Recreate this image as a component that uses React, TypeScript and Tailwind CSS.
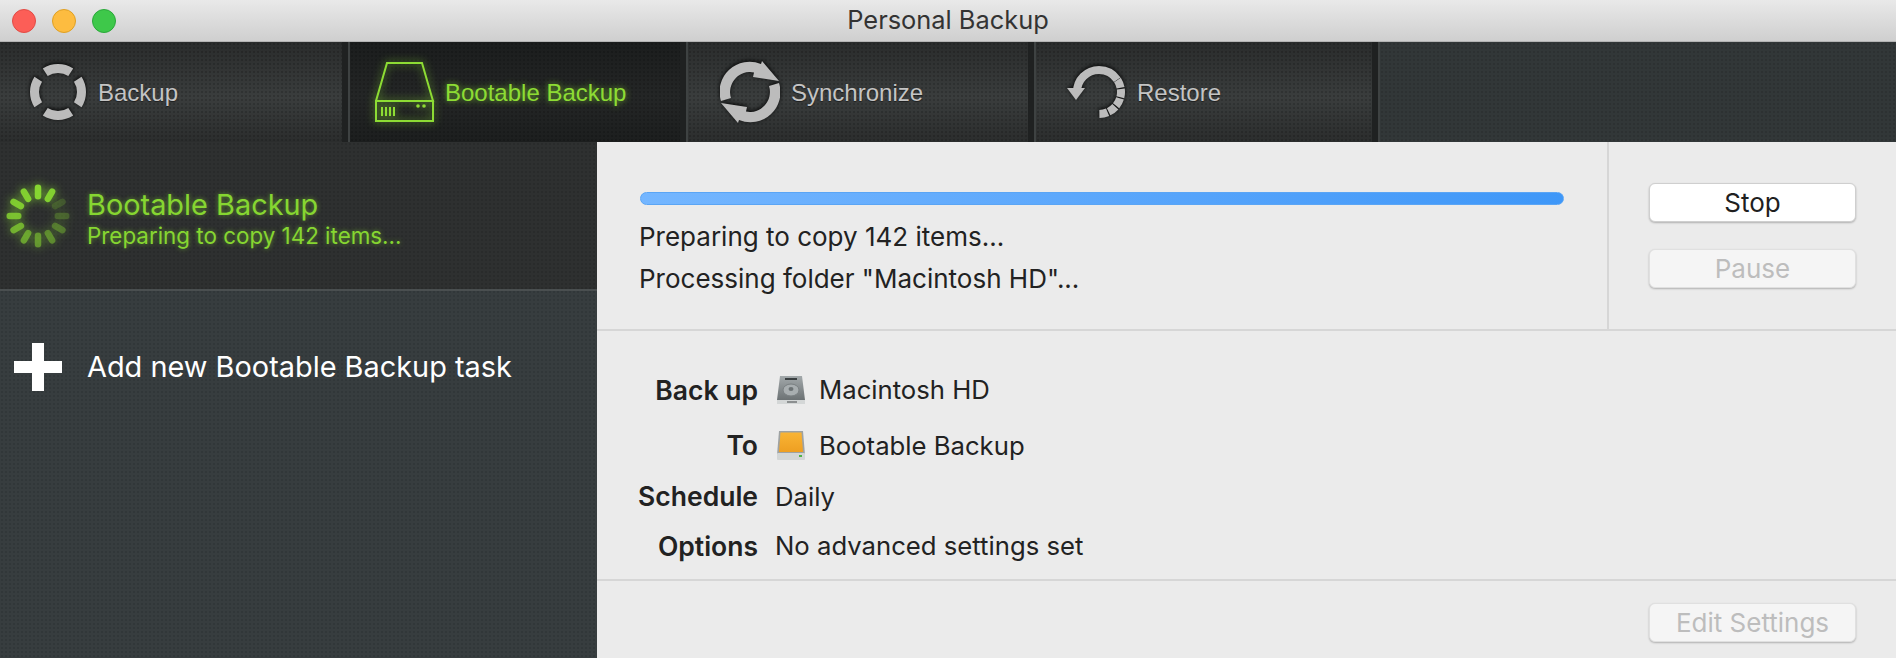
import type { ReactNode } from 'react';

const dots =
  'bg-[radial-gradient(circle,rgba(0,0,0,0.1)_1px,transparent_1.2px)] bg-[size:4px_4px]';
const tabDots =
  'bg-[radial-gradient(circle,rgba(0,0,0,0.16)_1px,transparent_1.2px),linear-gradient(to_bottom,#2a2c2c,#3a3d3d_55%,#2b2d2d)] bg-[size:4px_4px,100%_100%]';
const activeDots =
  'bg-[radial-gradient(circle,rgba(0,0,0,0.16)_1px,transparent_1.2px),linear-gradient(to_bottom,#1b1d1d,#242626_55%,#1c1e1e)] bg-[size:4px_4px,100%_100%]';

function BackupIcon() {
  return (
    <svg width="56" height="56" viewBox="0 0 56 56" className="drop-shadow-[0_-1px_2px_rgba(0,0,0,0.9)]">
      <circle cx="28" cy="28" r="23.5" fill="none" stroke="#bcbcbc" strokeWidth="9" pathLength={360} strokeDasharray="66 24" strokeDashoffset="33" />
    </svg>
  );
}

function DriveIcon() {
  return (
    <svg width="60" height="62" viewBox="0 0 60 62" className="drop-shadow-[0_0_4px_rgba(140,230,50,0.75)]">
      <g fill="none" stroke="#8ddc34" strokeWidth="2">
        <path d="M12 2H47L58 40H1Z" />
        <rect x="1" y="40" width="57" height="20" />
        <path d="M7 46V55M11 46V55M15 46V55M19 46V55" />
      </g>
      <circle cx="43" cy="45" r="1.8" fill="#8ddc34" />
      <circle cx="49" cy="45" r="1.8" fill="#8ddc34" />
    </svg>
  );
}

function SyncIcon() {
  const arrow = 'M1 40A30 30 0 0 1 41 3L42 0L59 20L33 16L34 11.4A20 20 0 0 0 11 37Z';
  return (
    <svg width="60" height="62" viewBox="0 0 60 62" className="drop-shadow-[0_-1px_2px_rgba(0,0,0,0.9)]">
      <path d={arrow} fill="#bcbcbc" />
      <path d={arrow} fill="#bcbcbc" transform="rotate(180 30 31)" />
    </svg>
  );
}

function RestoreIcon() {
  return (
    <svg width="58" height="60" viewBox="0 0 58 60" className="drop-shadow-[0_-1px_2px_rgba(0,0,0,0.9)]">
      <g fill="none" stroke="#bcbcbc" strokeWidth="8">
        <circle cx="32" cy="30" r="22" pathLength={360} strokeDasharray="146 214" transform="rotate(180 32 30)" />
        {[-33, -8, 17, 42, 67].map((a) => (
          <circle key={a} cx="32" cy="30" r="22" pathLength={360} strokeDasharray="22 338" transform={`rotate(${a} 32 30)`} />
        ))}
      </g>
      <path d="M0 26H18L9 38Z" fill="#bcbcbc" />
    </svg>
  );
}

function Spinner() {
  const alpha = [1, 0.95, 0.2, 0.26, 0.38, 0.48, 0.55, 0.62, 0.72, 0.82, 0.9, 0.95];
  return (
    <svg width="64" height="64" viewBox="0 0 64 64" className="drop-shadow-[0_0_5px_rgba(140,230,50,0.8)]">
      {alpha.map((o, i) => (
        <rect key={i} x="28.75" y="0.5" width="6.5" height="15" rx="3.25" fill="#86d631" opacity={o} transform={`rotate(${i * 30} 32 32)`} />
      ))}
    </svg>
  );
}

function HdIcon() {
  return (
    <svg width="28" height="30" viewBox="0 0 28 30">
      <defs>
        <linearGradient id="hd" x1="0" y1="0" x2="0" y2="1">
          <stop offset="0" stopColor="#a3a9ab" />
          <stop offset="1" stopColor="#6c7274" />
        </linearGradient>
      </defs>
      <path d="M3 1H25L28 25H0Z" fill="url(#hd)" />
      <rect x="8" y="3" width="12" height="2" fill="#3a3f41" />
      <ellipse cx="14" cy="15" rx="8" ry="6" fill="#a8aeb0" stroke="#7a8082" />
      <ellipse cx="14" cy="14" rx="2.5" ry="2" fill="#6c7274" />
      <rect x="0" y="25" width="28" height="4" fill="#d4d7d7" />
      <path d="M11 26V28M13 26V28M15 26V28M17 26V28M19 26V28" stroke="#44494a" />
    </svg>
  );
}

function ExternalIcon() {
  return (
    <svg width="28" height="30" viewBox="0 0 28 30">
      <defs>
        <linearGradient id="ext" x1="0" y1="0" x2="0" y2="1">
          <stop offset="0" stopColor="#f9b434" />
          <stop offset="1" stopColor="#ee9f22" />
        </linearGradient>
      </defs>
      <path d="M2 0H26L28 24H0Z" fill="#9ea2a3" />
      <path d="M3.5 1.5H24.5L26 21H2Z" fill="url(#ext)" />
      <rect x="0" y="22" width="28" height="7" rx="1" fill="#d3d6d6" />
      <rect x="22" y="24" width="3" height="2" fill="#4fb348" />
    </svg>
  );
}

function Tab({ width, active, className, children }: { width: string; active?: boolean; className: string; children: ReactNode }) {
  return (
    <div
      className={`${width} ${className} ${active ? activeDots : tabDots} flex h-full shrink-0 items-center border-r-2 border-r-[#3e4242] shadow-[inset_-6px_0_0_#1f2121]`}
    >
      {children}
    </div>
  );
}

function TabLabel({ children, active }: { children: ReactNode; active?: boolean }) {
  return (
    <span
      className={`pt-[2px] font-['Liberation_Sans',sans-serif] text-[24px] ${
        active
          ? 'text-[#8ddc34] [text-shadow:0_0_6px_rgba(140,230,50,0.75)]'
          : 'text-[#c4c4c4] [text-shadow:0_1px_1px_rgba(0,0,0,0.5)]'
      }`}
    >
      {children}
    </span>
  );
}

function Row({ label, height, children }: { label: string; height: string; children: ReactNode }) {
  return (
    <div className={`${height} flex items-center`}>
      <div className="w-[161px] text-right text-[26.5px] font-semibold">{label}</div>
      <div className="ml-[17px] flex items-center text-[25.7px]">{children}</div>
    </div>
  );
}

function Button({ label, disabled }: { label: string; disabled?: boolean }) {
  return (
    <button
      className={`h-[39px] w-[207px] rounded-[6px] border text-[26px] leading-none shadow-[0_1px_2px_rgba(0,0,0,0.25)] ${
        disabled ? 'border-[#e0e0e0] bg-[#f5f5f5] text-[#bdbdbd]' : 'border-[#cfcfcf] bg-white text-[#1f1f1f]'
      }`}
    >
      {label}
    </button>
  );
}

export default function App() {
  return (
    <div className="flex h-[658px] w-[1896px] flex-col overflow-hidden bg-[#ebebeb] font-['Inter',sans-serif] text-[#222]">
      {/* Title bar */}
      <div className="grid h-[42px] shrink-0 grid-cols-[1fr_auto_1fr] items-center border-b border-b-[#b4b4b4] bg-gradient-to-b from-[#e9e9e9] to-[#cfcfcf]">
        <div className="flex gap-4 pl-3">
          <div className="h-6 w-6 rounded-full border border-[#e24b45] bg-[#fc5e57]" />
          <div className="h-6 w-6 rounded-full border border-[#dfa023] bg-[#fdbc40]" />
          <div className="h-6 w-6 rounded-full border border-[#2aa83a] bg-[#3ec84a]" />
        </div>
        <div className="text-[25.4px] text-[#333]">Personal Backup</div>
        <div />
      </div>

      {/* Toolbar */}
      <div className="flex h-[100px] shrink-0 bg-[#323738]">
        <Tab width="w-[350px]" className="gap-3 pl-[30px]">
          <BackupIcon />
          <TabLabel>Backup</TabLabel>
        </Tab>
        <Tab width="w-[338px]" active className="gap-[10px] pl-[25px]">
          <DriveIcon />
          <TabLabel active>Bootable Backup</TabLabel>
        </Tab>
        <Tab width="w-[348px]" className="gap-[11px] pl-[32px]">
          <SyncIcon />
          <TabLabel>Synchronize</TabLabel>
        </Tab>
        <Tab width="w-[344px]" className="gap-3 pl-[31px]">
          <RestoreIcon />
          <TabLabel>Restore</TabLabel>
        </Tab>
        <div className={`flex-1 ${dots}`} />
      </div>

      <div className="flex min-h-0 flex-1">
        {/* Sidebar */}
        <div className={`w-[597px] shrink-0 bg-[#373d3f] ${dots}`}>
          <div className={`flex h-[147px] items-center gap-[17px] bg-[#2e3030] pl-[6px] ${dots}`}>
            <Spinner />
            <div className="pt-[6px] text-[#86d631] [text-shadow:0_0_5px_rgba(140,230,50,0.55)]">
              <div className="text-[28.9px] leading-[34px]">Bootable Backup</div>
              <div className="text-[22.4px] leading-[28px]">Preparing to copy 142 items...</div>
            </div>
          </div>
          <div className="h-[2px] bg-[#4a4f50]" />
          <div className="flex items-center gap-[25px] pl-[14px] pt-[52px] text-white">
            <svg width="48" height="48" viewBox="0 0 48 48">
              <path d="M18 0H30V18H48V30H30V48H18V30H0V18H18Z" fill="#fff" />
            </svg>
            <span className="text-[28.9px]">Add new Bootable Backup task</span>
          </div>
        </div>

        {/* Detail pane */}
        <div className="flex min-w-0 flex-1 flex-col">
          <div className="flex h-[189px] shrink-0 border-b-2 border-b-[#d6d6d6]">
            <div className="flex-1 px-[43px] pt-[50px] text-[26px]">
              <div className="h-[13px] rounded-full border border-[#5aa5f5] bg-gradient-to-r from-[#74b6ff] to-[#3e97f8]" />
              <div className="-ml-px mt-[11px] leading-[41px]">Preparing to copy 142 items...</div>
              <div className="-ml-px mt-[2px] leading-[40px]">Processing folder "Macintosh HD"...</div>
            </div>
            <div className="flex w-[289px] shrink-0 flex-col gap-[27px] border-l-2 border-l-[#d6d6d6] pl-[40px] pt-[41px]">
              <Button label="Stop" />
              <Button label="Pause" disabled />
            </div>
          </div>
          <div className="h-[250px] shrink-0 border-b-2 border-b-[#d6d6d6] pt-[32px]">
            <Row label="Back up" height="h-[55px]">
              <span className="ml-[2px] mr-[14px] flex"><HdIcon /></span>
              Macintosh HD
            </Row>
            <Row label="To" height="h-[56px]">
              <span className="ml-[2px] mr-[14px] flex"><ExternalIcon /></span>
              Bootable Backup
            </Row>
            <Row label="Schedule" height="h-[46px]">Daily</Row>
            <Row label="Options" height="h-[53px]">No advanced settings set</Row>
          </div>
          <div className="flex flex-1 justify-end pr-[40px] pt-[22px]">
            <Button label="Edit Settings" disabled />
          </div>
        </div>
      </div>
    </div>
  );
}
